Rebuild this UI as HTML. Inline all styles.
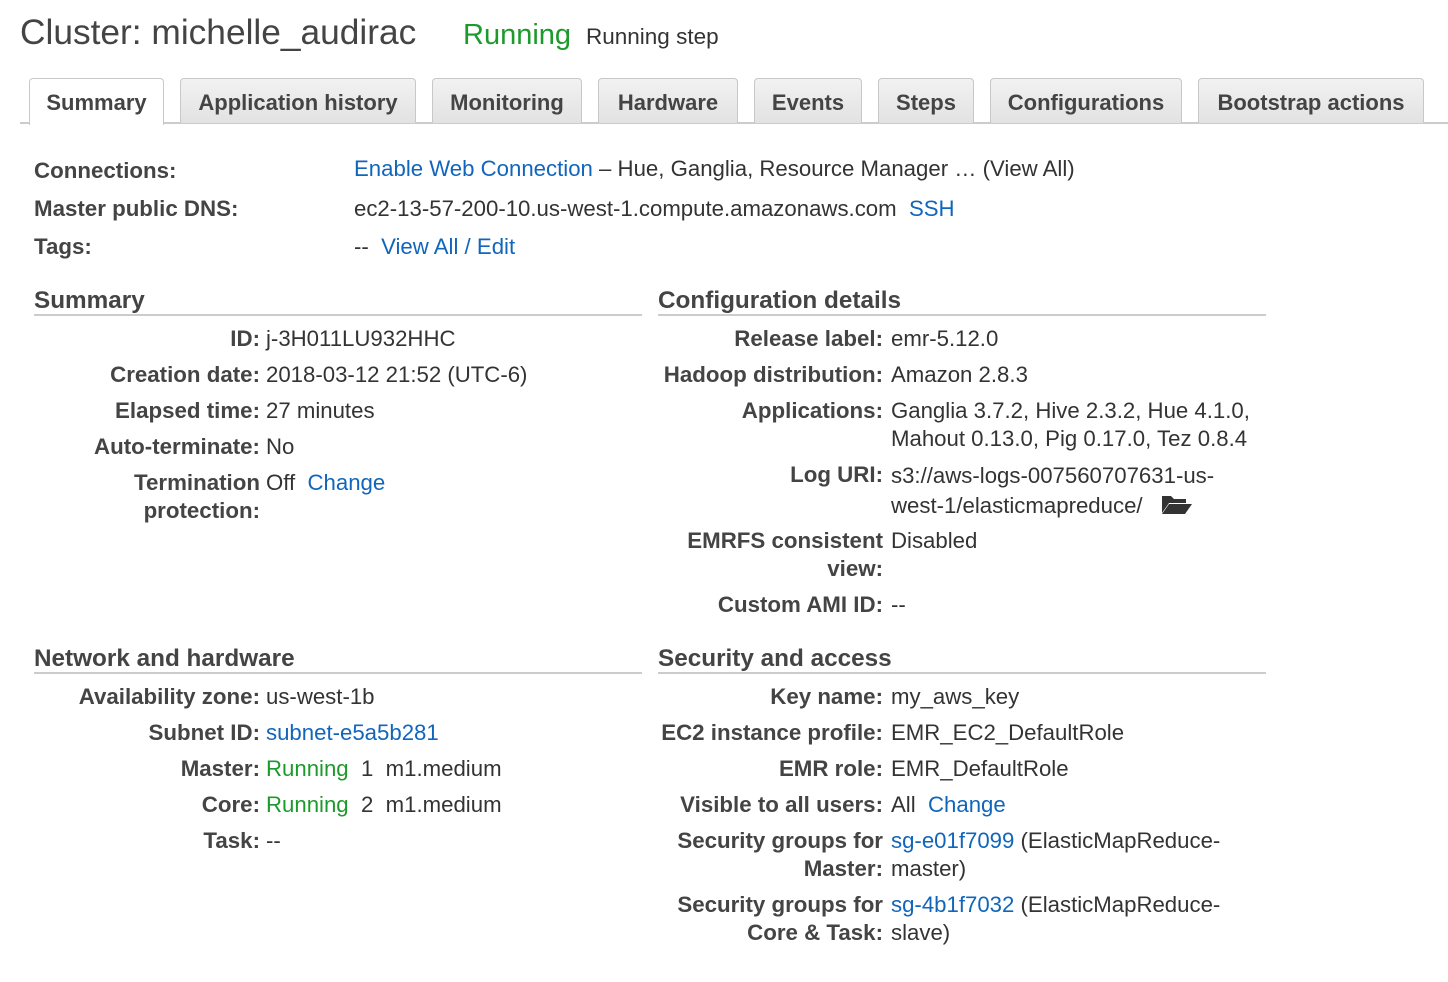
<!DOCTYPE html>
<html><head><meta charset="utf-8"><style>
body{margin:0;width:1448px;height:982px;background:#fff;font-family:"Liberation Sans",Arial,sans-serif;color:#333;position:relative;overflow:hidden}
.a{position:absolute;font-size:22.2px;line-height:28px;white-space:nowrap}
.b{font-weight:bold;color:#444;font-size:22.3px}
.l{text-align:right}
.L{right:1188px}
.R{right:565px}
.vl{left:266px}
.vr{left:891px}
a,.lk{color:#1166bb;text-decoration:none}
.g{color:#1d9a2c}
.tab{position:absolute;top:78px;height:45px;box-sizing:border-box;border:1px solid #c8c8c8;border-bottom:none;border-radius:4px 4px 0 0;background:linear-gradient(#f2f2f2,#e2e2e2);font-weight:bold;font-size:22px;color:#444;text-align:center;line-height:48px;white-space:nowrap}
.hdr{position:absolute;font-size:24.3px;font-weight:bold;color:#444;line-height:28px}
.ul{position:absolute;height:2px;background:#ccc}
</style></head><body>
<div class="a" style="left:20px;top:13px;font-size:35.3px;line-height:40px;color:#444">Cluster: michelle_audirac</div>
<div class="a g" style="left:463px;top:18px;font-size:29px;line-height:34px">Running</div>
<div class="a" style="left:586px;top:23px;font-size:22.5px">Running step</div>

<div style="position:absolute;left:20px;right:0;top:122px;height:2px;background:#ccc"></div>
<div class="tab" style="left:29px;width:135px;background:#fff;height:47px">Summary</div>
<div class="tab" style="left:180px;width:236px">Application history</div>
<div class="tab" style="left:432px;width:150px">Monitoring</div>
<div class="tab" style="left:598px;width:140px">Hardware</div>
<div class="tab" style="left:754px;width:108px">Events</div>
<div class="tab" style="left:878px;width:96px">Steps</div>
<div class="tab" style="left:990px;width:192px">Configurations</div>
<div class="tab" style="left:1198px;width:226px">Bootstrap actions</div>

<div class="a b" style="left:34px;top:157px">Connections:</div>
<div class="a b" style="left:34px;top:195px">Master public DNS:</div>
<div class="a b" style="left:34px;top:233px">Tags:</div>
<div class="a" style="left:354px;top:155px"><a>Enable Web Connection</a> – Hue, Ganglia, Resource Manager … (View All)</div>
<div class="a" style="left:354px;top:195px">ec2-13-57-200-10.us-west-1.compute.amazonaws.com &nbsp;<a>SSH</a></div>
<div class="a" style="left:354px;top:233px">-- &nbsp;<a>View All / Edit</a></div>

<div class="hdr" style="left:34px;top:287px">Summary</div>
<div class="ul" style="left:34px;width:608px;top:314px"></div>
<div class="hdr" style="left:658px;top:287px">Configuration details</div>
<div class="ul" style="left:658px;width:608px;top:314px"></div>

<div class="a b l L" style="top:325px">ID:</div><div class="a vl" style="top:325px">j-3H011LU932HHC</div>
<div class="a b l L" style="top:361px">Creation date:</div><div class="a vl" style="top:361px">2018-03-12 21:52 (UTC-6)</div>
<div class="a b l L" style="top:397px">Elapsed time:</div><div class="a vl" style="top:397px">27 minutes</div>
<div class="a b l L" style="top:433px">Auto-terminate:</div><div class="a vl" style="top:433px">No</div>
<div class="a b l L" style="top:469px">Termination<br>protection:</div><div class="a vl" style="top:469px">Off &nbsp;<a>Change</a></div>

<div class="a b l R" style="top:325px">Release label:</div><div class="a vr" style="top:325px">emr-5.12.0</div>
<div class="a b l R" style="top:361px">Hadoop distribution:</div><div class="a vr" style="top:361px">Amazon 2.8.3</div>
<div class="a b l R" style="top:397px">Applications:</div><div class="a vr" style="top:397px">Ganglia 3.7.2, Hive 2.3.2, Hue 4.1.0,<br>Mahout 0.13.0, Pig 0.17.0, Tez 0.8.4</div>
<div class="a b l R" style="top:461px">Log URI:</div><div class="a vr" style="top:461px;line-height:30px">s3://aws-logs-007560707631-us-<br>west-1/elasticmapreduce/ &nbsp;
<svg width="32" height="22" viewBox="0 0 32 22" style="vertical-align:-2px"><path d="M1 3h9l3 3h12v4H8L1 20z" fill="#333"/><path d="M8 11h23l-7 10H1z" fill="#333"/></svg></div>
<div class="a b l R" style="top:527px">EMRFS consistent<br>view:</div><div class="a vr" style="top:527px">Disabled</div>
<div class="a b l R" style="top:591px">Custom AMI ID:</div><div class="a vr" style="top:591px">--</div>

<div class="hdr" style="left:34px;top:645px">Network and hardware</div>
<div class="ul" style="left:34px;width:608px;top:672px"></div>
<div class="hdr" style="left:658px;top:645px">Security and access</div>
<div class="ul" style="left:658px;width:608px;top:672px"></div>

<div class="a b l L" style="top:683px">Availability zone:</div><div class="a vl" style="top:683px">us-west-1b</div>
<div class="a b l L" style="top:719px">Subnet ID:</div><div class="a vl" style="top:719px"><a>subnet-e5a5b281</a></div>
<div class="a b l L" style="top:755px">Master:</div><div class="a vl" style="top:755px"><span class="g">Running</span> &nbsp;1 &nbsp;m1.medium</div>
<div class="a b l L" style="top:791px">Core:</div><div class="a vl" style="top:791px"><span class="g">Running</span> &nbsp;2 &nbsp;m1.medium</div>
<div class="a b l L" style="top:827px">Task:</div><div class="a vl" style="top:827px">--</div>

<div class="a b l R" style="top:683px">Key name:</div><div class="a vr" style="top:683px">my_aws_key</div>
<div class="a b l R" style="top:719px">EC2 instance profile:</div><div class="a vr" style="top:719px">EMR_EC2_DefaultRole</div>
<div class="a b l R" style="top:755px">EMR role:</div><div class="a vr" style="top:755px">EMR_DefaultRole</div>
<div class="a b l R" style="top:791px">Visible to all users:</div><div class="a vr" style="top:791px">All &nbsp;<a>Change</a></div>
<div class="a b l R" style="top:827px">Security groups for<br>Master:</div><div class="a vr" style="top:827px"><a>sg-e01f7099</a> (ElasticMapReduce-<br>master)</div>
<div class="a b l R" style="top:891px">Security groups for<br>Core &amp; Task:</div><div class="a vr" style="top:891px"><a>sg-4b1f7032</a> (ElasticMapReduce-<br>slave)</div>
</body></html>
